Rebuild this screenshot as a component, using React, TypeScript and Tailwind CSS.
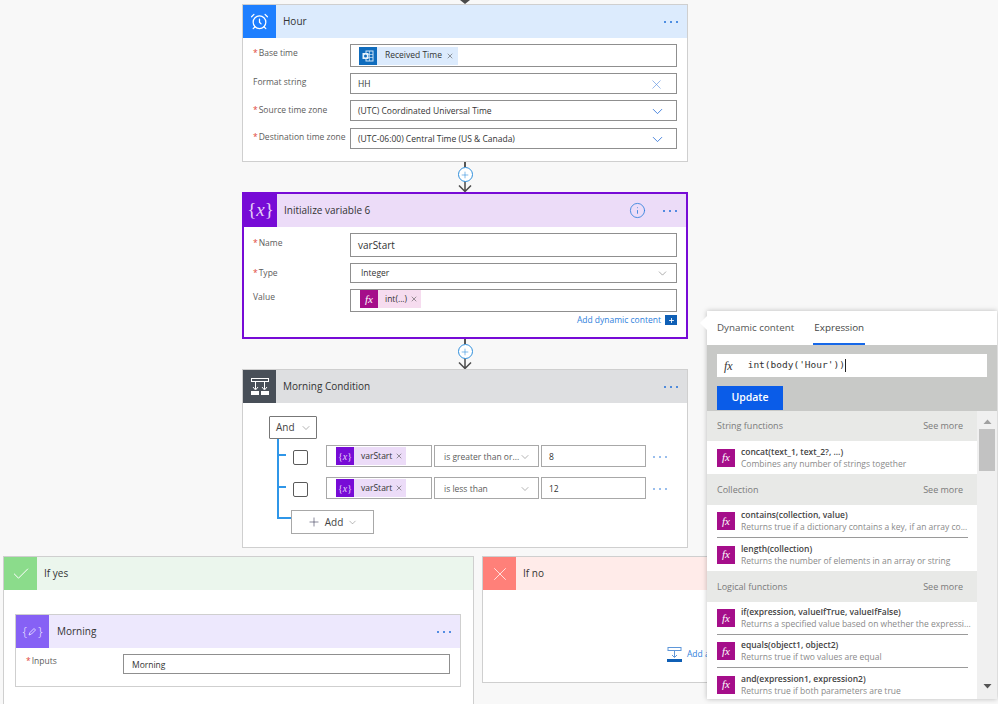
import React from "react";
import { AlarmClock, Check, ChevronDown, Info, Plus, X } from "lucide-react";

const Dots = ({ className = "" }: { className?: string }) => (
  <div className={`flex gap-[4px] ${className}`}>
    <span className="h-[2px] w-[2px] rounded-full bg-[#1f6fd8]" />
    <span className="h-[2px] w-[2px] rounded-full bg-[#1f6fd8]" />
    <span className="h-[2px] w-[2px] rounded-full bg-[#1f6fd8]" />
  </div>
);

const Fx = ({ className = "" }: { className?: string }) => (
  <span
    className={`flex h-[18px] w-[18px] shrink-0 items-center justify-center bg-[#a50e8a] font-['Liberation_Serif',serif] text-[11px] italic text-white ${className}`}
  >
    fx
  </span>
);

const VarIcon = () => (
  <span className="flex h-[18px] w-[18px] shrink-0 items-center justify-center bg-[#770bd6] font-['Liberation_Serif',serif] text-[10px] text-[#e5d0f7]">
    {"{"}
    <i>x</i>
    {"}"}
  </span>
);

const Field = ({
  label,
  required,
  children,
  labelOffset = "pt-0",
}: {
  label: string;
  required?: boolean;
  children: React.ReactNode;
  labelOffset?: string;
}) => (
  <div className="flex">
    <div className={`w-[97px] shrink-0 whitespace-nowrap text-[8.5px] leading-[12px] text-[#5c5c5c] ${labelOffset}`}>
      {required ? <span className="mr-px text-[#e0443a]">*</span> : null}
      {label}
    </div>
    {children}
  </div>
);

const Input = ({ className = "", children }: { className?: string; children: React.ReactNode }) => (
  <div className={`flex w-[327px] items-center border border-[#8f8f8f] bg-white pl-[7px] text-[8.5px] text-[#333333] ${className}`}>
    {children}
  </div>
);

const Arrow = () => (
  <svg width="16" height="12" viewBox="0 0 16 12" className="block">
    <path d="M8 0V11M2 5.5L8 11.5L14 5.5" fill="none" stroke="#4a4a4a" strokeWidth="1.5" />
  </svg>
);

const Connector = () => (
  <div className="flex h-[30px] flex-col items-center">
    <div className="h-[5px] w-[1.5px] bg-[#555555]" />
    <div className="relative z-10 flex h-[15px] w-[15px] shrink-0 items-center justify-center rounded-full border border-[#2f8fdc] bg-white">
      <Plus size={10} strokeWidth={1.4} className="text-[#2f8fdc]" />
    </div>
    <div className="-mt-[2px]">
      <Arrow />
    </div>
  </div>
);

const Token = ({ label, tone, icon }: { label: string; tone: string; icon: React.ReactNode }) => (
  <div className={`flex h-[18px] items-center ${tone}`}>
    {icon}
    <span className="ml-[7px] whitespace-nowrap text-[8.5px] text-[#333333]">{label}</span>
    <X size={8} strokeWidth={1.6} className="mx-[3px] text-[#444444]" />
  </div>
);

const ConditionRow = ({ op, value }: { op: string; value: string }) => (
  <div className="flex h-[32px]">
    <div className="h-full w-[16px] shrink-0 border-l-2 border-[#2f96e8]">
      <div className="mt-[15px] h-[2px] w-[7px] bg-[#2f96e8]" />
    </div>
    <div className="mt-[11px] h-[15px] w-[15px] shrink-0 rounded-[2px] border border-[#5a5a5a] bg-white" />
    <div className="ml-[18px] mt-[6px] flex h-[22px] w-[106px] items-center border border-[#a8a8a8] pl-[9px]">
      <Token label="varStart" tone="bg-[#ecdcf8]" icon={<VarIcon />} />
    </div>
    <div className="ml-[2px] mt-[6px] flex h-[22px] w-[105px] items-center justify-between border border-[#a8a8a8] px-[9px] pt-[2px] text-[8.5px] text-[#5c5c5c]">
      <span className="whitespace-nowrap">{op}</span>
      <ChevronDown size={12} strokeWidth={1} className="-mr-[2px] shrink-0 text-[#666666]" />
    </div>
    <div className="ml-[2px] mt-[6px] flex h-[22px] w-[105px] items-center border border-[#a8a8a8] pl-[7px] pt-[2px] text-[8.5px] text-[#333333]">
      {value}
    </div>
    <Dots className="ml-[7px] mt-[17px] gap-[3px] opacity-60" />
  </div>
);

const Card = ({
  title,
  icon,
  iconBg,
  headerBg,
  border = "border border-[#cfcfcf]",
  right,
  titleGap = "pl-[7px]",
  className = "",
  children,
}: {
  title: string;
  icon: React.ReactNode;
  iconBg: string;
  headerBg: string;
  border?: string;
  right?: React.ReactNode;
  titleGap?: string;
  className?: string;
  children?: React.ReactNode;
}) => (
  <div className={`bg-white ${border} ${className}`}>
    <div className={`flex h-[33px] items-center ${headerBg}`}>
      <div className={`flex h-[33px] w-[33px] shrink-0 items-center justify-center ${iconBg}`}>{icon}</div>
      <div className={`flex-1 text-[10px] text-[#333333] ${titleGap}`}>{title}</div>
      {right ?? <Dots className="mr-[9px]" />}
    </div>
    {children}
  </div>
);

const SectionHead = ({ label, className = "" }: { label: string; className?: string }) => (
  <div className={`flex items-center justify-between bg-[#e8e9e7] pl-[10px] pr-[14px] text-[9px] text-[#7a7a7a] ${className}`}>
    <span>{label}</span>
    <span>See more</span>
  </div>
);

const FnItem = ({ name, desc, className = "" }: { name: string; desc: string; className?: string }) => (
  <div className={`ml-[10px] mr-[9px] flex items-center ${className}`}>
    <Fx />
    <div className="ml-[6px] min-w-0">
      <div className="whitespace-nowrap text-[8.5px] font-semibold leading-[12px] text-[#444444]">{name}</div>
      <div className="whitespace-nowrap text-[8.5px] leading-[12px] text-[#8a8a8a]">{desc}</div>
    </div>
  </div>
);

export default function App() {
  return (
    <div className="relative h-[704px] w-[998px] overflow-hidden bg-[#f8f8f8] font-['Open_Sans',sans-serif]">
      <div className="ml-[242px] w-[446px]">
        <div className="flex h-[4px] justify-center overflow-hidden">
          <svg width="12" height="4" viewBox="0 0 12 4">
            <path d="M1 0L6 4L11 0Z" fill="#4a4a4a" />
          </svg>
        </div>

        <Card
          title="Hour"
          icon={<AlarmClock size={19} strokeWidth={1.6} className="text-white" />}
          iconBg="bg-[#1e7fff]"
          headerBg="bg-[#dcebfd]"
          className="h-[158px]"
        >
          <div className="flex flex-col pl-[10px] pt-[6px]">
            <Field label="Base time" required labelOffset="pt-[3px]">
              <Input className="h-[23px]">
                <div className="ml-px flex h-[18px] items-center bg-[#dcebfd]">
                  <span className="flex h-[18px] w-[18px] items-center justify-center bg-[#0f6cbd]">
                    <svg width="12" height="12" viewBox="0 0 12 12">
                      <rect x="4" y="1" width="7" height="10" fill="none" stroke="#cfe4f7" strokeWidth="1" />
                      <path d="M4 4.5H11M4 7.5H11M7.5 1V11" stroke="#cfe4f7" strokeWidth="0.7" />
                      <rect x="0.5" y="3" width="6" height="6" fill="#e8f2fb" />
                      <circle cx="3.5" cy="6" r="1.5" fill="#0f6cbd" />
                    </svg>
                  </span>
                  <span className="ml-[8px] text-[8.5px] text-[#333333]">Received Time</span>
                  <X size={8} strokeWidth={1.6} className="mx-[4px] text-[#444444]" />
                </div>
              </Input>
            </Field>
            <div className="mt-[6px]">
              <Field label="Format string" labelOffset="pt-[3px]">
                <Input className="h-[21px] justify-between pt-[2px]">
                  <span>HH</span>
                  <X size={15} strokeWidth={1} className="mr-[12px] text-[#5a8fe0]" />
                </Input>
              </Field>
            </div>
            <div className="mt-[6px]">
              <Field label="Source time zone" required labelOffset="pt-[4px]">
                <Input className="h-[21px] justify-between pt-[2px]">
                  <span>(UTC) Coordinated Universal Time</span>
                  <ChevronDown size={17} strokeWidth={1.2} className="mr-[10px] text-[#2f72d8]" />
                </Input>
              </Field>
            </div>
            <div className="mt-[7px]">
              <Field label="Destination time zone" required labelOffset="pt-[3px]">
                <Input className="h-[21px] justify-between pt-[2px]">
                  <span>(UTC-06:00) Central Time (US &amp; Canada)</span>
                  <ChevronDown size={17} strokeWidth={1.2} className="mr-[10px] text-[#2f72d8]" />
                </Input>
              </Field>
            </div>
          </div>
        </Card>

        <Connector />

        <Card
          title="Initialize variable 6"
          icon={
            <span className="font-['Liberation_Serif',serif] text-[19px] text-[#e5d0f7]">
              {"{"}
              <i>x</i>
              {"}"}
            </span>
          }
          iconBg="bg-[#770bd6]"
          headerBg="bg-[#ecdcf8]"
          border="border-2 border-[#770bd6]"
          className="h-[147px]"
          right={
            <div className="mr-[9px] flex items-center">
              <Info size={17} strokeWidth={1.2} className="mr-[17px] text-[#2f7fdc]" />
              <Dots />
            </div>
          }
        >
          <div className="flex flex-col pl-[9px] pt-[6px]">
            <Field label="Name" required labelOffset="pt-[4px]">
              <Input className="h-[24px] w-[326px] pl-[5px] text-[10px]">varStart</Input>
            </Field>
            <div className="mt-[6px]">
              <Field label="Type" required labelOffset="pt-[4px]">
                <Input className="h-[20px] w-[326px] justify-between pl-[10px] pt-px">
                  <span>Integer</span>
                  <ChevronDown size={13} strokeWidth={1} className="mr-[7px] text-[#666666]" />
                </Input>
              </Field>
            </div>
            <div className="mt-[6px]">
              <Field label="Value" labelOffset="pt-[2px]">
                <Input className="h-[23px] w-[326px] items-start pl-[9px]">
                  <Token label="int(...)" tone="bg-[#f6dcef]" icon={<Fx />} />
                </Input>
              </Field>
            </div>
            <div className="mr-[9px] mt-[2px] flex items-center justify-end">
              <span className="text-[8.5px] text-[#2f7fdc]">Add dynamic content</span>
              <span className="ml-[4px] flex h-[10px] w-[12px] items-center justify-center bg-[#0f5fb5]">
                <Plus size={7} strokeWidth={3} className="text-white" />
              </span>
            </div>
          </div>
        </Card>

        <Connector />

        <Card
          title="Morning Condition"
          icon={
            <svg width="20" height="18" viewBox="0 0 20 18">
              <rect x="1.5" y="0.5" width="17" height="3" fill="none" stroke="#ffffff" />
              <path d="M5.5 4V11M14.5 4V11" stroke="#ffffff" />
              <path d="M3 9L5.5 12L8 9M12 9L14.5 12L17 9" fill="none" stroke="#ffffff" />
              <rect x="1" y="13" width="8" height="4" fill="#ffffff" />
              <rect x="11" y="13" width="8" height="4" fill="#ffffff" />
            </svg>
          }
          iconBg="bg-[#484f58]"
          headerBg="bg-[#dedfe1]"
          className="h-[179px]"
        >
          <div className="pl-[26px] pt-[13px]">
            <div className="flex h-[23px] w-[48px] items-center justify-between rounded-[1px] border border-[#777777] pl-[6px] pr-[4px] text-[10px] text-[#444444]">
              <span>And</span>
              <ChevronDown size={12} strokeWidth={1} className="text-[#666666]" />
            </div>
            <div className="ml-[8px]">
              <ConditionRow op="is greater than or..." value="8" />
              <ConditionRow op="is less than" value="12" />
              <div className="flex">
                <div className="h-[16px] w-[14px] border-b-2 border-l-2 border-[#2f96e8]" />
                <div className="mt-[7px] flex h-[24px] w-[83px] items-center justify-center border border-[#a8a8a8] bg-white text-[10px] text-[#444444]">
                  <Plus size={14} strokeWidth={1} className="mr-[4px] text-[#333355]" />
                  <span>Add</span>
                  <ChevronDown size={11} strokeWidth={1} className="ml-[4px] text-[#666666]" />
                </div>
              </div>
            </div>
          </div>
        </Card>
      </div>

      <div className="mt-[8px] flex pl-[3px]">
        <Card
          title="If yes"
          icon={<Check size={20} strokeWidth={1.2} className="text-white" />}
          iconBg="bg-[#8bdc8b]"
          headerBg="bg-[#ebf6ed]"
          right={<span />}
          className="h-[170px] w-[471px] shrink-0"
        >
          <div className="pl-[11px] pt-[24px]">
            <Card
              title="Morning"
              icon={
                <span className="flex items-center text-[13px] font-light text-[#e8e0ff]">
                  {"{"}
                  <svg width="9" height="9" viewBox="0 0 9 9" className="mx-px">
                    <path d="M1 8L2 5.5L6 1.5L7.5 3L3.5 7Z" fill="none" stroke="#e8e0ff" strokeWidth="0.9" />
                  </svg>
                  {"}"}
                </span>
              }
              iconBg="bg-[#8661f5]"
              headerBg="bg-[#ede8fd]"
              titleGap="pl-[8px]"
              className="h-[73px] w-[446px]"
            >
              <div className="pl-[10px] pt-[6px]">
                <div className="flex">
                  <div className="w-[97px] text-[8.5px] leading-[14px] text-[#5c5c5c]">
                    <span className="mr-px text-[#e0443a]">*</span>Inputs
                  </div>
                  <div className="flex h-[20px] w-[327px] items-center border border-[#8f8f8f] pl-[8px] pt-[2px] text-[8.5px] text-[#333333]">
                    Morning
                  </div>
                </div>
              </div>
            </Card>
          </div>
        </Card>

        <Card
          title="If no"
          icon={<X size={22} strokeWidth={1} className="text-[#ffe9e6]" />}
          iconBg="bg-[#ff8079]"
          headerBg="bg-[#ffebe9]"
          right={<span />}
          className="ml-[8px] h-[127px] w-[470px] shrink-0"
        >
          <div className="flex items-center pl-[184px] pt-[57px]">
            <svg width="15" height="15" viewBox="0 0 15 15">
              <rect x="1" y="0.5" width="13" height="3" fill="none" stroke="#5f97d9" />
              <path d="M7.5 4V10M5 8L7.5 10.5L10 8" fill="none" stroke="#5f97d9" />
              <rect x="0" y="12" width="15" height="3" fill="#0f5fb5" />
            </svg>
            <span className="ml-[5px] whitespace-nowrap text-[8.5px] text-[#2f7fdc]">Add a</span>
          </div>
        </Card>
      </div>

      <div className="absolute left-[707px] top-[311px] h-[388px] w-[290px] bg-white shadow-[0_0_5px_rgba(0,0,0,0.25)]">
        <div className="absolute -left-[5px] top-[7px] h-[10px] w-[10px] rotate-45 bg-white" />
        <div className="relative flex h-[34px] items-center pl-[10px] text-[9.8px] text-[#555555]">
          <span>Dynamic content</span>
          <span className="relative ml-[20px] text-[#444444]">
            Expression
            <span className="absolute -bottom-[10px] -left-[1px] -right-[1px] h-[2px] bg-[#1768e8]" />
          </span>
        </div>
        <div className="h-[66px] bg-[#c8c9c7] pl-[10px] pt-[9px]">
          <div className="flex h-[23px] w-[270px] items-center bg-white">
            <span className="ml-[7px] font-['Liberation_Serif',serif] text-[12px] italic text-[#333333]">fx</span>
            <span className="ml-[15px] font-['DejaVu_Sans_Mono',monospace] text-[9.5px] text-[#333333]">int(body('Hour'))</span>
            <span className="h-[13px] w-px bg-[#222222]" />
          </div>
          <div className="mt-[9px] flex h-[24px] w-[66px] items-center justify-center bg-[#0a5ce8] text-[10.5px] font-semibold text-white">
            Update
          </div>
        </div>
        <div className="flex h-[288px]">
          <div className="w-[270px] shrink-0 overflow-hidden">
            <SectionHead label="String functions" className="h-[30px]" />
            <FnItem name="concat(text_1, text_2?, ...)" desc="Combines any number of strings together" className="h-[33px]" />
            <SectionHead label="Collection" className="h-[31px]" />
            <FnItem
              name="contains(collection, value)"
              desc="Returns true if a dictionary contains a key, if an array co..."
              className="h-[33px] border-b border-[#9a9a9a]"
            />
            <FnItem name="length(collection)" desc="Returns the number of elements in an array or string" className="h-[33px]" />
            <SectionHead label="Logical functions" className="h-[31px]" />
            <FnItem
              name="if(expression, valueIfTrue, valueIfFalse)"
              desc="Returns a specified value based on whether the expressi..."
              className="h-[33px] border-b border-[#9a9a9a]"
            />
            <FnItem
              name="equals(object1, object2)"
              desc="Returns true if two values are equal"
              className="h-[33px] border-b border-[#9a9a9a]"
            />
            <FnItem name="and(expression1, expression2)" desc="Returns true if both parameters are true" className="h-[33px]" />
          </div>
          <div className="flex flex-1 flex-col items-center bg-[#f0f0f0]">
            <svg width="9" height="5" viewBox="0 0 9 5" className="mt-[8px]">
              <path d="M0.5 5L4.5 0.5L8.5 5Z" fill="#a0a0a0" />
            </svg>
            <div className="mt-[5px] h-[42px] w-[16px] bg-[#c2c2c2]" />
            <svg width="9" height="5" viewBox="0 0 9 5" className="mt-[213px]">
              <path d="M0.5 0L4.5 4.5L8.5 0Z" fill="#555555" />
            </svg>
          </div>
        </div>
      </div>
    </div>
  );
}
